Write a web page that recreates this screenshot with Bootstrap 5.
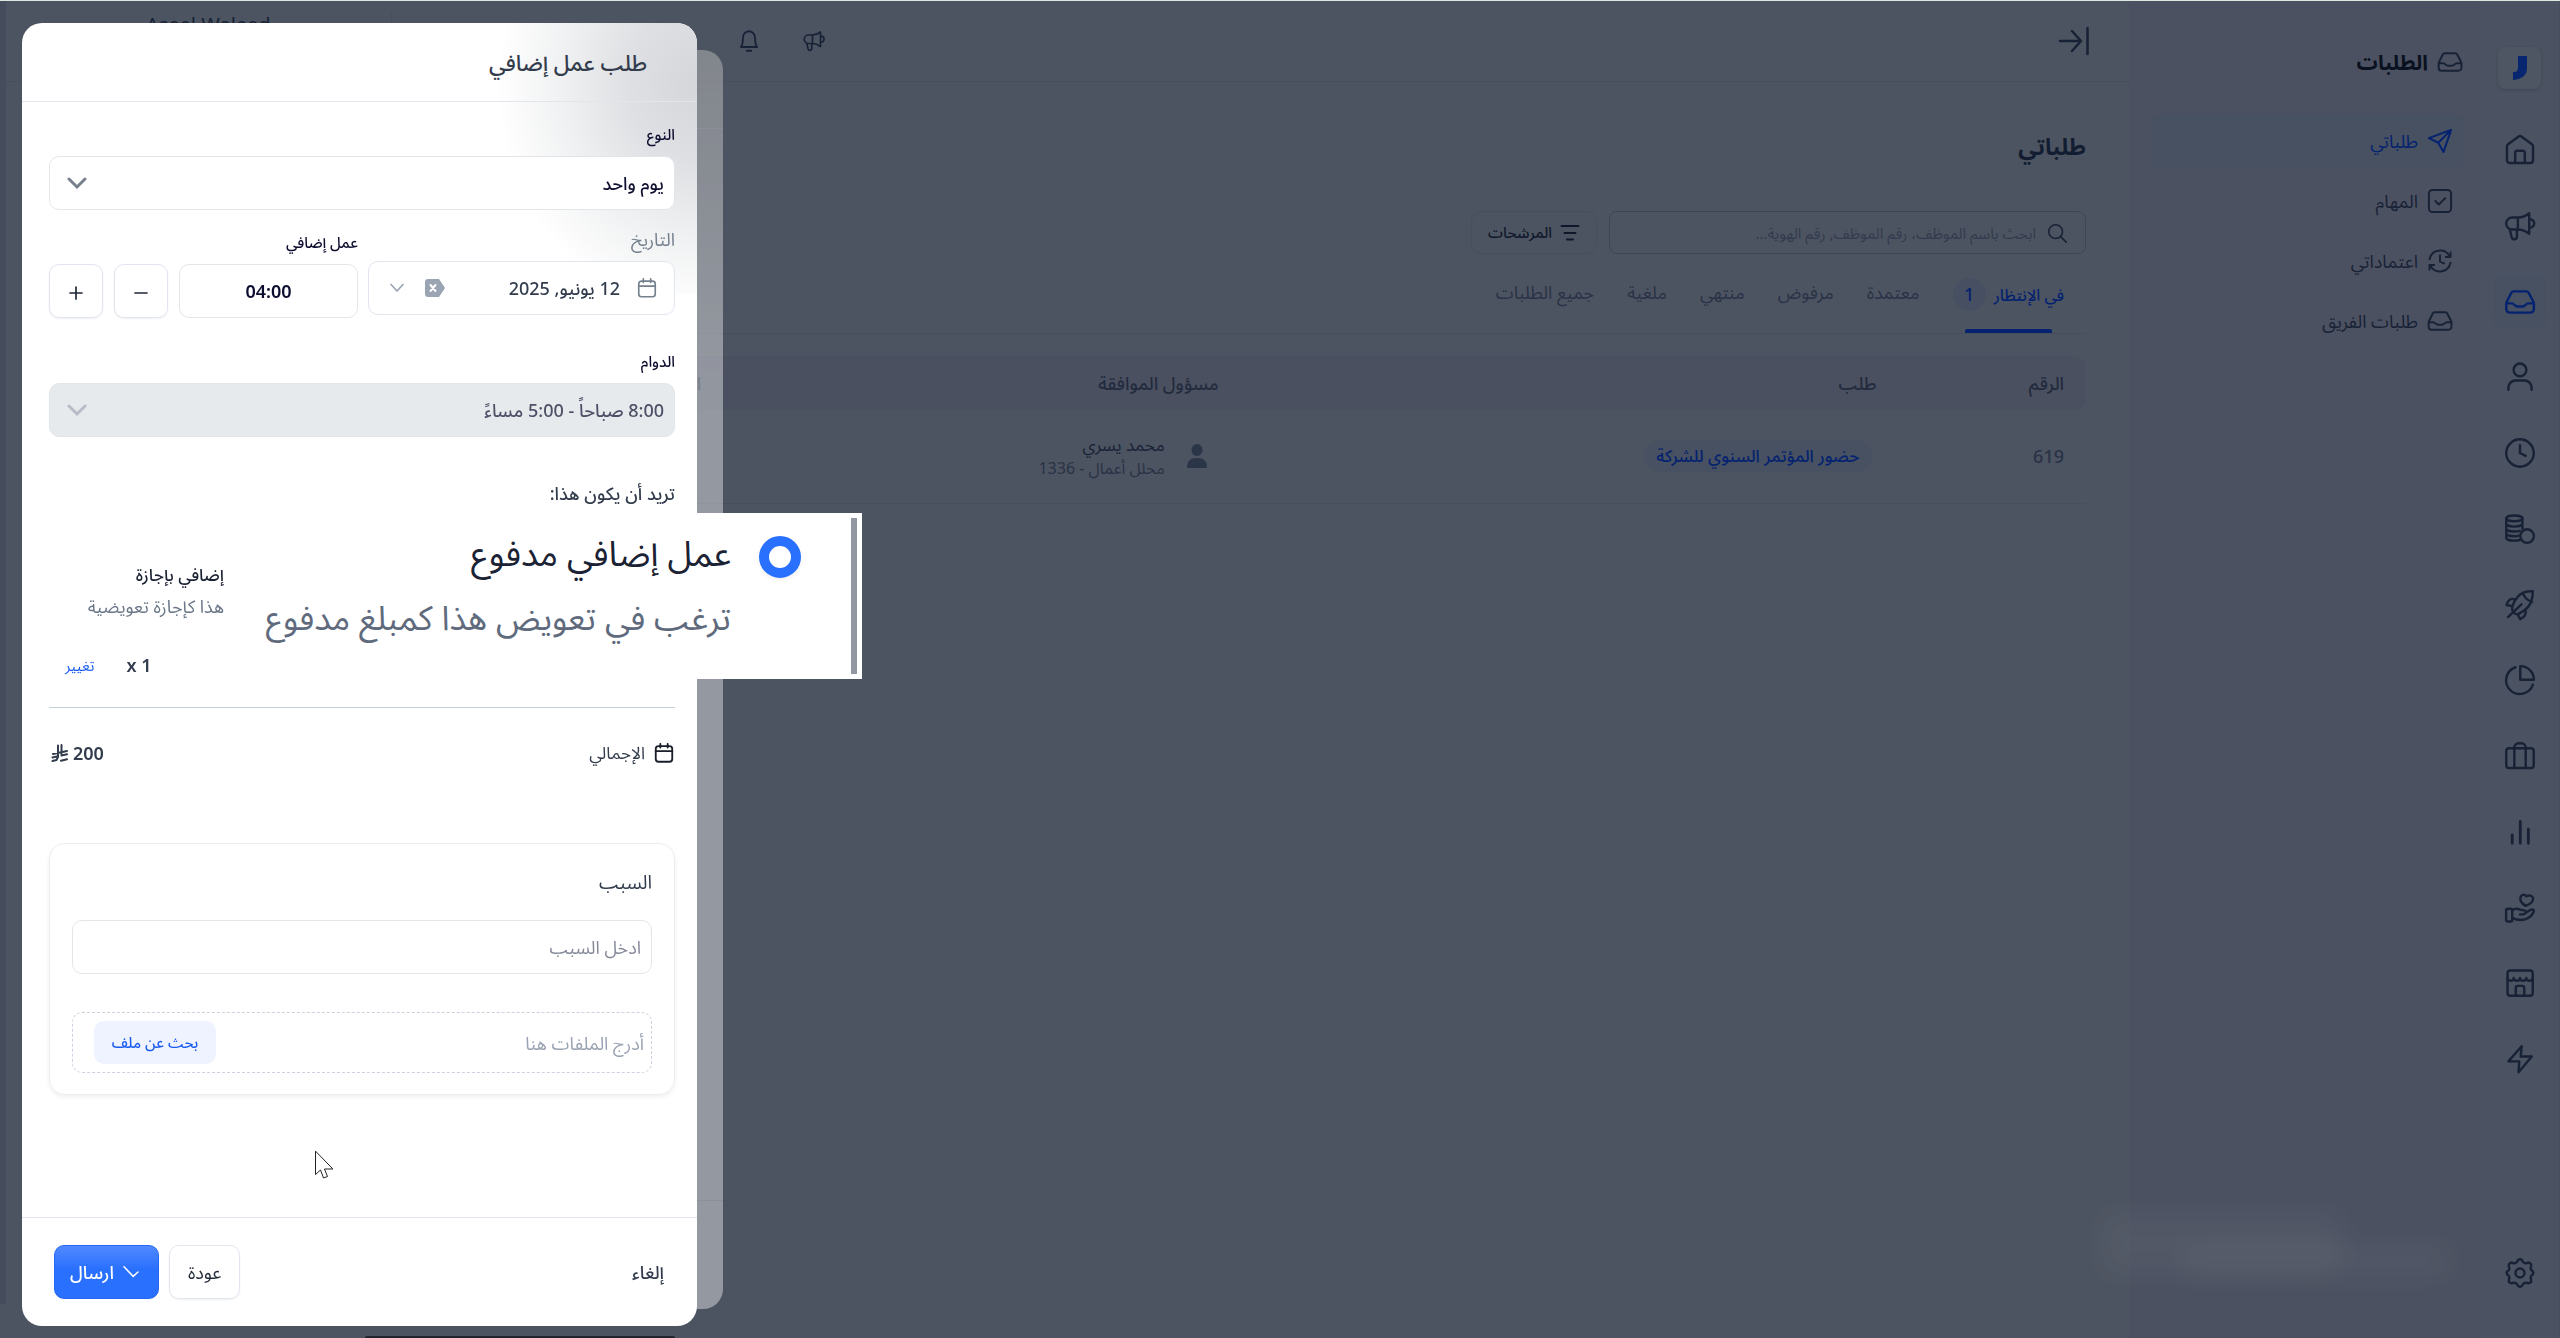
<!DOCTYPE html>
<html lang="ar" dir="rtl">
<head>
<meta charset="utf-8">
<meta name="viewport" content="width=device-width, initial-scale=1">
<title>الطلبات</title>
<link href="https://cdn.jsdelivr.net/npm/bootstrap@5.3.0/dist/css/bootstrap.min.css" rel="stylesheet">
<style>
:root{--ink:#182236;--soft:#293246;--line:#474e5c;--blue:#04226f;--tint:#475162}
body{font-family:"Noto Sans","Noto Sans Arabic","DejaVu Sans",sans-serif;font-size:18px;line-height:28px;color:var(--ink);background:#4d5461;border-top:1px solid #dfe5e0;overflow:hidden}
a{color:inherit;text-decoration:none}
svg{fill:none;stroke:currentColor;stroke-width:1.7;stroke-linecap:round;stroke-linejoin:round;flex:none}
.shell{height:calc(100vh - 1px)}
.rail{width:80px;background:#4b5261;border-right:1px solid var(--line);padding:46px 0 38px}
.rail-logo{width:43px;height:42px;border-radius:8px;background:#4f5663;box-shadow:0 1px 3px #3f4655}
.rail-list{margin:34px 0 160px}
.rail-item{width:54px;height:54px;border-radius:10px}
.rail-item.active{background:var(--tint);color:var(--blue)}
.side{width:351px;background:#4b5160;padding:41px 16px 0 22px}
.side h2{font-size:21px;line-height:40px;font-weight:700;color:#0a1120}
.side-link{height:54px;border-radius:10px;padding:0 10px;margin-bottom:6px}
.side-link.active{background:var(--tint);color:var(--blue)}
.gutter{width:6px;height:1303px;background:#454c5b}
.top-bar{height:81px;border-bottom:1px solid var(--line);padding:0 38px 0 140px}
.top-rule{width:1px;height:58px;background:var(--line)}
.bell{margin-left:344px}
.mega{margin-left:40px}
.user-name{margin-right:120px;padding-bottom:32px;font-size:20px}
.content{padding:41px 43px 0}
.content h1{font-size:23px;line-height:46px;font-weight:700;color:#131d31}
.tools{margin-top:42px}
.search{width:477px;height:43px;border:1px solid #3b4759;border-radius:8px;padding:0 17px 0 0}
.search input{background:none;border:0;outline:0;font-size:15px;color:var(--ink)}
.search input::placeholder{color:#323b4e;opacity:1}
.filter-btn{height:43px;border:1px solid var(--line);border-radius:10px;font-size:15px;font-weight:500;color:#0f172a;padding:0 16px}
.tabs{border-bottom:1px solid var(--line);height:80px;padding:0 22px;gap:33px;color:var(--soft)}
.tabs a{padding:24px 0 0;white-space:nowrap}
.tabs a.active{color:var(--blue);position:relative;font-size:16px;font-weight:500}
.tabs a.active::after{content:"";position:absolute;left:12px;right:12px;bottom:0;height:4px;border-radius:2px 2px 0 0;background:var(--blue)}
.count{display:inline-block;width:33px;height:33px;line-height:33px;border-radius:17px;background:#475063;text-align:center;margin-right:4px;font-size:18px}
.req-table{table-layout:fixed;margin-top:22px}
.req-table th{background:#4a5060;height:54px;padding:0 22px;font-weight:500;color:#222b3e}
.req-table th:first-child{border-radius:0 12px 12px 0}
.req-table td{height:93px;padding:0 22px;border-bottom:1px solid var(--line);color:var(--soft)}
.req-table td:first-child{font-weight:500}
.pill{background:var(--tint);color:var(--blue);border-radius:16px;padding:0 12px;font-size:17px;font-weight:500;display:inline-block;line-height:32px;margin-right:5px}
.approver{gap:22px;padding-right:12px}
.approver small{font-size:16px;line-height:22px}
.approver div div{font-size:17px;line-height:24px;color:var(--ink)}
.smudge{position:fixed;background:rgba(255,255,255,.045);filter:blur(14px);border-radius:12px}
.taskbar{position:fixed;left:365px;bottom:0;width:310px;height:2px;border-radius:10px 10px 0 0;background:#20252e}
.back-drawer{position:fixed;left:22px;top:50px;bottom:29px;width:701px;border-radius:20px;background:linear-gradient(#0000001f,#0000001a 60px,transparent 330px) no-repeat,rgba(255,255,255,.4)}
.back-drawer::before{content:"";position:absolute;left:0;right:0;top:78px;bottom:108px;border:solid #8c909b;border-width:1px 0}
.drawer{position:fixed;left:22px;top:23px;bottom:12px;width:675px;border-radius:20px;background:#fff;color:#323c4d}
.drawer::before{content:"";position:absolute;right:0;top:0;width:210px;height:270px;border-radius:0 20px 0 0;background:radial-gradient(ellipse 200px 230px at 100% 22%,#d4d6da 0,#dfe0e3 35%,#f0f1f2 68%,#fff 100%)}
.drawer>*{position:relative}
.drawer-head{height:79px;border-bottom:1px solid #e2e5ec;padding:0 50px}
.drawer-head h2{font-size:22px;line-height:40px;font-weight:500}
.drawer-main{padding:18px 22px 0 27px}
.lbl{display:block;font-size:15px;font-weight:500;line-height:28px;margin-bottom:8px;color:#0d0d30}
.lbl-soft{font-size:18px;font-weight:400;color:#75808f}
.field{height:54px;border:1px solid #e2e5ea;border-radius:10px;background-color:#fff;color:#0d0d30;font-size:18px;padding:0 10px}
.field::placeholder{color:#85899a}
select.field{padding:0 10px 0 40px;font-weight:500;background-position:left 17px center;background-size:20px;background-image:url("data:image/svg+xml,%3Csvg xmlns='http://www.w3.org/2000/svg' viewBox='0 0 20 20' fill='none' stroke='%2377808c' stroke-width='3' stroke-linecap='round'%3E%3Cpath d='M2 6l8 8 8-8'/%3E%3C/svg%3E")}
select.field:disabled{background-color:#e6eaed;color:#4d5066;opacity:1;background-image:url("data:image/svg+xml,%3Csvg xmlns='http://www.w3.org/2000/svg' viewBox='0 0 20 20' fill='none' stroke='%23b9bbc6' stroke-width='3' stroke-linecap='round'%3E%3Cpath d='M2 6l8 8 8-8'/%3E%3C/svg%3E")}
.form-line{margin-top:15px;gap:10px}
.date-col{width:307px}
.date-box{padding:0 16px 0 20px;border-color:#e0e5ee}
.date-box input{border:0;outline:0;background:none;width:0;color:#323c4d;font-size:18px;font-weight:500}
.clear-btn{background:none;border:0;padding:0;line-height:0;color:#9ba4b2;margin-left:20px}
.hours-col{min-width:0;padding-top:3px}
.hours-col input{width:0;font-weight:600}
.step-btn{width:54px;flex:none;padding:0;box-shadow:0 1px 2px #0f172a12;color:#1f2937;border-color:#e0e5ee}
.shift-lbl{margin-top:29px}
.opt{height:144px;padding-top:54px;width:175px;margin-right:auto;white-space:nowrap}
.opt span{display:block;line-height:28px}
.opt-name{color:#1b2233;font-weight:500;font-size:17px}
.opt-note{color:#6b7788;font-size:18px;margin-top:3px}
.factor{padding:0 0 28px 16px;gap:32px}
.total{padding:31px 0 0 2px}
.drawer hr{margin:0;border-color:#c5cfd6;opacity:1}
.reason{border:1px solid #ebedf0;border-radius:16px;box-shadow:0 2px 4px #0f172a12;padding:24px 22px 21px;margin-top:76px}
.reason .field{margin:24px 0 38px}
.drop{height:61px;border:1px dashed #ccd3de;border-radius:10px;padding:0 7px 0 21px;color:#9aa3b3;font-size:18px}
.browse-btn{height:43px;width:122px;border-radius:10px;background:#eef3ff;color:#1c5df0;font-size:15px;font-weight:500;padding:0;border:0}
.drawer-foot{border-top:1px solid #e2e5ec;height:109px;padding:0 33px 0 32px;gap:10px}
.drawer-foot .btn{height:54px;border-radius:10px;padding:0 18px;font-size:18px;color:#1f2937}
.drawer-foot .send-btn{background:linear-gradient(#5189ff,#2970ff 45%);border:1px solid #2468f5;color:#fff;padding:0 18px 0 15px;font-weight:500}
.drawer-foot .back-btn{border:1px solid #e2e6ee;box-shadow:0 1px 2px #0f172a12}
.spot{position:absolute!important;left:202px;top:490px;width:638px;height:166px;background:#fff;padding:5px}
.spot-inner{height:156px;border-right:6px solid #9397a1;padding:3px 50px 0 0;gap:28px}
.spot input{width:42px;height:42px;margin:15px 0 0;appearance:none;border:10px solid #2970ff;border-radius:50%;box-shadow:0 2px 4px #0001}
.spot span{display:block;font-size:35px;line-height:64px;color:#1b2233;white-space:nowrap}
.spot .spot-note{color:#5f6b7d;font-size:34px}
.pointer{position:fixed;left:314px;top:1150px}
</style>
<script src="https://cdn.jsdelivr.net/npm/bootstrap@5.3.0/dist/js/bootstrap.bundle.min.js"></script>
</head>
<body>
<svg width="0" height="0" class="position-absolute">
<symbol id="i-inbox" viewBox="0 0 24 24"><path d="M7.6 4.5h8.8a2 2 0 0 1 1.8 1.1l3.4 6.6c.2.3.2.7.2 1V17a2.5 2.5 0 0 1-2.5 2.5H4.800A2.500 2.500 0 0 1 2.300 17v-3.800c0-.3.1-.7.2-1l3.300-6.600a2 2 0 0 1 1.800-1.100zM2.400 13h3.800c1.800 0 2 2.200 4 2.200h3.600c2 0 2.200-2.200 4-2.200h3.900"/></symbol>
<symbol id="i-mega" viewBox="0 0 24 24"><path d="M6.500 6H10.500v8.500H6.500a4.250 4.250 0 0 1 0-8.500zM10.500 6c3 0 5.500-1 8-3v14.500c-2.500-2-5-3-8-3M19 7.200a3 3 0 0 1 0 6M4.800 14.500l1.300 5.500a1.900 1.900 0 0 0 3.700-.4v-5"/></symbol>
<symbol id="i-cal" viewBox="0 0 24 24"><rect x="3" y="4.500" width="18" height="17" rx="3"/><path d="M3 10h18M8 2v4M16 2v4"/></symbol>
</svg>

<div class="shell d-flex">
  <nav class="rail d-flex flex-column align-items-center flex-shrink-0" aria-label="رئيسي">
    <a href="#" class="rail-logo d-flex align-items-center justify-content-center"><svg width="16" height="26" viewBox="0 0 16 26" style="fill:#082670;stroke:none"><path d="M6 1h9v12c0 7-4 11-14 12v-8c4 0 5-1 5-5z"/></svg></a>
    <div class="rail-list d-flex flex-column justify-content-between flex-grow-1">
      <a href="#" class="rail-item d-flex align-items-center justify-content-center"><svg width="34" height="34" viewBox="0 0 24 24"><path d="M2.800 9.500a2 2 0 0 1 .8-1.500l7.200-5.400a2 2 0 0 1 2.400 0L20.400 8a2 2 0 0 1 .8 1.500v9.700a2 2 0 0 1-2 2H4.800a2 2 0 0 1-2-2zM8.600 21v-7a1.500 1.500 0 0 1 1.500-1.500h3.800a1.500 1.500 0 0 1 1.500 1.500v7"/></svg></a>
      <a href="#" class="rail-item d-flex align-items-center justify-content-center"><svg width="34" height="34"><use href="#i-mega"/></svg></a>
      <a href="#" class="rail-item active d-flex align-items-center justify-content-center"><svg width="34" height="34"><use href="#i-inbox"/></svg></a>
      <a href="#" class="rail-item d-flex align-items-center justify-content-center"><svg width="34" height="34" viewBox="0 0 24 24"><circle cx="12" cy="7" r="4.500"/><path d="M3.800 21v-1.500a5 5 0 0 1 5-5h6.400a5 5 0 0 1 5 5V21"/></svg></a>
      <a href="#" class="rail-item d-flex align-items-center justify-content-center"><svg width="34" height="34" viewBox="0 0 24 24"><circle cx="12" cy="12" r="9.700"/><path d="M12 6.500V12l4 2"/></svg></a>
      <a href="#" class="rail-item d-flex align-items-center justify-content-center"><svg width="34" height="34" viewBox="0 0 24 24"><ellipse cx="8" cy="4.500" rx="5.700" ry="2"/><path d="M2.300 4.500v13.600c0 1.200 2.500 2.100 5.700 2.100 1.600 0 3-.2 4-.6M13.700 4.500v7.200M2.300 8.200c0 1.200 2.500 2.100 5.700 2.100s5.700-.9 5.700-2.100M2.300 11.700c0 1.200 2.500 2.100 5.700 2.100 1.400 0 2.800-.2 3.800-.5M2.300 15c0 1.200 2.500 2.100 5.700 2.100 1.200 0 2.300-.1 3.200-.4"/><circle cx="17" cy="17" r="4.800"/></svg></a>
      <a href="#" class="rail-item d-flex align-items-center justify-content-center"><svg width="34" height="34" viewBox="0 0 24 24"><path d="M6.500 13.500C8 8 12 3 17.500 2.500l3.500-.3-.2 4C20 12 16.500 16 10.500 18.500c-2 .6-4.800-2.500-4-5zM14 3.800c1.500 3.500 3 5 6.500 6M3.500 20.500l9.500-9M8.500 8.500C6 6.500 3.500 8.500 2.500 12l4 .8M16 15.800c.5 3-1.200 5-3.800 6.200l-1.900-3.500"/></svg></a>
      <a href="#" class="rail-item d-flex align-items-center justify-content-center"><svg width="34" height="34" viewBox="0 0 24 24"><path d="M8.800 3A9.700 9.700 0 1 0 21.100 15.300M12.200 2.200a9.500 9.500 0 0 1 9.600 9.600h-9.600z"/></svg></a>
      <a href="#" class="rail-item d-flex align-items-center justify-content-center"><svg width="34" height="34" viewBox="0 0 24 24"><rect x="2.300" y="6.500" width="19.400" height="14" rx="2"/><path d="M8 20.500V6a3 3 0 0 1 3-3h2a3 3 0 0 1 3 3v14.500"/></svg></a>
      <a href="#" class="rail-item d-flex align-items-center justify-content-center"><svg width="34" height="34" viewBox="0 0 24 24" style="stroke-width:2"><path d="M6.500 14v6M12.200 4.500V20M17.900 10v10"/></svg></a>
      <a href="#" class="rail-item d-flex align-items-center justify-content-center"><svg width="34" height="34" viewBox="0 0 24 24"><rect x="2.200" y="12.500" width="4.300" height="9" rx="1"/><path d="M6.500 13.500c2-1.500 3.500-1.300 5.500-.3 1.200.5 3.300 0 4 1 .5 1.300-.5 2.300-2.500 2.300H12M16 15.300l3.500-2c1.500-.7 2.500 0 2.300 1-1.300 3.700-5 6.200-9 6.200-2.500 0-4.500-.5-6.300-1.500M16 10.500c-2.500-1.500-4.500-4-3.500-6.500 1-1.800 3-1.800 4-.3 1.800-1 4.300-.7 4.700 1.300.2 2.500-2.500 4.500-5.200 5.500z"/></svg></a>
      <a href="#" class="rail-item d-flex align-items-center justify-content-center"><svg width="34" height="34" viewBox="0 0 24 24"><rect x="3.200" y="3.200" width="17.800" height="17.800" rx="2"/><path d="M3.200 8.500c0 2.500 4.200 2.500 4.400 0 .2 2.500 4.200 2.500 4.400 0 .2 2.500 4.200 2.500 4.400 0 .2 2.500 4.600 2.500 4.600 0M9 21v-5.500a1.500 1.500 0 0 1 1.500-1.500h3a1.500 1.500 0 0 1 1.500 1.500V21"/></svg></a>
      <a href="#" class="rail-item d-flex align-items-center justify-content-center"><svg width="34" height="34" viewBox="0 0 24 24"><path d="M13.200 3 3.800 13.700h7.700L11 21.300l9.300-11.100h-7.800z"/></svg></a>
    </div>
    <a href="#" class="rail-item d-flex align-items-center justify-content-center"><svg width="34" height="34" viewBox="0 0 24 24"><path d="M9.700 4.300 10.600 3a1.800 1.800 0 0 1 2.800 0l.9 1.300a2 2 0 0 0 2.100.8l1.500-.3a1.800 1.800 0 0 1 2 2l-.3 1.500a2 2 0 0 0 .8 2l.3.300a1.800 1.800 0 0 1 0 2.800l-.4.300a2 2 0 0 0-.7 2l.3 1.500a1.800 1.800 0 0 1-2 2l-1.500-.3a2 2 0 0 0-2.100.8L13.400 21a1.800 1.800 0 0 1-2.800 0l-.9-1.300a2 2 0 0 0-2.100-.8l-1.500.3a1.800 1.800 0 0 1-2-2l.3-1.500a2 2 0 0 0-.7-2l-.4-.300a1.800 1.800 0 0 1 0-2.800l.4-.300a2 2 0 0 0 .7-2l-.3-1.500a1.800 1.800 0 0 1 2-2l1.500.3a2 2 0 0 0 2.100-.8z"/><circle cx="12" cy="12" r="3.200"/></svg></a>
  </nav>

  <aside class="side flex-shrink-0">
    <div class="d-flex align-items-center gap-2 mb-4 pb-2"><svg width="28" height="28"><use href="#i-inbox"/></svg><h2 class="m-0">الطلبات</h2></div>
    <a href="#" class="side-link active d-flex align-items-center gap-2"><svg width="28" height="28" viewBox="0 0 24 24"><path d="M21.500 2.500 2.500 9.500l8 4 4.500 8zM21.500 2.500l-11 11"/></svg><span>طلباتي</span></a>
    <a href="#" class="side-link d-flex align-items-center gap-2"><svg width="28" height="28" viewBox="0 0 24 24"><rect x="2.500" y="2.500" width="19" height="19" rx="3"/><path d="m8 12 3 3 5.500-5.500"/></svg><span>المهام</span></a>
    <a href="#" class="side-link d-flex align-items-center gap-2"><svg width="28" height="28" viewBox="0 0 24 24"><path d="M3 10.500a9.300 9.300 0 0 1 17-3M21 13.500a9.300 9.300 0 0 1-17 3M21 4.500v4h-4M3 19.500v-4h4M12 7v5.500l3.500 1.500"/></svg><span>اعتماداتي</span></a>
    <a href="#" class="side-link d-flex align-items-center gap-2"><svg width="28" height="28"><use href="#i-inbox"/></svg><span>طلبات الفريق</span></a>
  </aside>

  <main class="flex-grow-1">
    <header class="top-bar d-flex align-items-center">
      <svg width="34" height="34" viewBox="0 0 34 34" style="stroke-width:2.500"><path d="M3 17h20M15 7l9 10-9 10M30.500 4v26"/></svg>
      <span class="flex-grow-1"></span>
      <svg width="24" height="24" class="mega"><use href="#i-mega"/></svg>
      <svg width="26" height="26" viewBox="0 0 24 24" class="bell"><path d="M4.500 17.500h15c-1.500-1.500-1.800-3-1.800-7.500 0-4-2.200-7-5.700-7s-5.700 3-5.700 7c0 4.500-.3 6-1.800 7.500zM10 21h4"/></svg>
      <span class="top-rule"></span>
      <span dir="ltr" class="user-name">Aseel Waleed</span>
    </header>
    <div class="content">
      <h1 class="mb-0">طلباتي</h1>
      <div class="tools d-flex gap-2">
        <label class="search d-flex align-items-center"><svg width="22" height="22" viewBox="0 0 24 24" class="ms-2"><circle cx="10.500" cy="10.500" r="7.500"/><path d="m16 16 6 6"/></svg><input class="flex-grow-1" type="search" aria-label="بحث" placeholder="ابحث باسم الموظف، رقم الموظف, رقم الهوية..."></label>
        <button class="btn filter-btn d-flex align-items-center gap-2 me-1"><svg width="20" height="20" viewBox="0 0 20 20" style="stroke-width:2"><path d="M1.500 3h17M4.500 10h11M7 16.500h6"/></svg>المرشحات</button>
      </div>
      <nav class="tabs d-flex">
        <a href="#" class="active">في الإنتظار <span class="count">1</span></a><a href="#">معتمدة</a><a href="#">مرفوض</a><a href="#">منتهي</a><a href="#">ملغية</a><a href="#">جميع الطلبات</a>
      </nav>
      <table class="req-table w-100">
        <colgroup><col style="width:9.200%"><col style="width:32.300%"><col style="width:25.400%"><col></colgroup>
        <thead><tr><th>الرقم</th><th>طلب</th><th>مسؤول الموافقة</th><th>الحالة</th></tr></thead>
        <tbody><tr><td>619</td><td><a href="#" class="pill">حضور المؤتمر السنوي للشركة</a></td><td><div class="approver d-flex align-items-center"><svg width="20" height="24" viewBox="0 0 20 24" style="fill:#2b3548;stroke:none"><ellipse cx="10" cy="6" rx="5.500" ry="6"/><path d="M0 24c0-7 3-10 10-10s10 3 10 10z"/></svg><div><div>محمد يسري</div><small class="d-block">محلل أعمال - 1336</small></div></div></td><td></td></tr></tbody>
      </table>
    </div>
  </main>
  <div class="gutter flex-shrink-0"></div>
</div>

<div class="smudge" style="left:2102px;top:1214px;width:240px;height:60px"></div>
<div class="smudge" style="left:2180px;top:1246px;width:270px;height:30px"></div>
<div class="taskbar"></div>
<div class="back-drawer"></div>

<section class="drawer d-flex flex-column" role="dialog" aria-label="طلب عمل إضافي">
  <div class="drawer-head d-flex align-items-center flex-shrink-0"><h2 class="m-0">طلب عمل إضافي</h2></div>
  <div class="drawer-main flex-grow-1">
    <label class="lbl" for="kind">النوع</label>
    <select id="kind" class="form-select field"><option>يوم واحد</option></select>
    <div class="form-line d-flex">
      <div class="date-col flex-shrink-0">
        <label class="lbl lbl-soft" for="day">التاريخ</label>
        <div class="field date-box d-flex align-items-center">
          <svg width="22" height="22" class="ms-3" style="color:#75808f;stroke-width:1.800"><use href="#i-cal"/></svg>
          <input id="day" class="flex-grow-1 p-0" value="12 يونيو, 2025">
          <button class="clear-btn" aria-label="مسح"><svg width="20" height="18" viewBox="0 0 20 18" style="fill:#9ba4b2;stroke:none"><path d="M3 0h11l6 9-6 9H3a3 3 0 0 1-3-3V3a3 3 0 0 1 3-3z"/><path d="m5.500 6 5 6m0-6-5 6" style="stroke:#fff;stroke-width:2"/></svg></button>
          <svg width="16" height="10" viewBox="0 0 16 10" style="color:#9ba4b2"><path d="m2 1.500 6 6.500 6-6.500"/></svg>
        </div>
      </div>
      <div class="hours-col flex-grow-1">
        <label class="lbl" for="hrs">عمل إضافي</label>
        <div class="d-flex" style="gap:11px">
          <input id="hrs" class="field flex-grow-1 text-center" value="04:00">
          <button class="btn field step-btn" aria-label="إنقاص"><svg width="18" height="18" viewBox="0 0 18 18"><path d="M3 9h12"/></svg></button>
          <button class="btn field step-btn" aria-label="زيادة"><svg width="18" height="18" viewBox="0 0 18 18"><path d="M3 9h12M9 3v12"/></svg></button>
        </div>
      </div>
    </div>
    <label class="lbl shift-lbl" for="shift">الدوام</label>
    <select id="shift" class="form-select field" disabled><option>8:00 صباحاً - 5:00 مساءً</option></select>
    <div class="fw-medium" style="margin-top:42px">تريد أن يكون هذا:</div>
    <div class="opt"><span class="opt-name">إضافي بإجازة</span><span class="opt-note">هذا كإجازة تعويضية</span></div>
    <div dir="ltr" class="factor d-flex align-items-center"><a href="#" style="color:#1c5df0;font-size:15px">تغيير</a><span class="fw-semibold">x 1</span></div>
    <hr>
    <div class="total d-flex align-items-center"><svg width="22" height="22" class="ms-2" style="color:#1b1f2a;stroke-width:2"><use href="#i-cal"/></svg><span style="font-size:17px">الإجمالي</span>
      <span class="me-auto d-flex align-items-center gap-1 fw-semibold">200 <svg width="18" height="18" viewBox="0 0 18 18" style="stroke-width:2"><path d="M7 1.500v11.500M10.500 1v10.500M2 10l14-3M1.500 13.500 7 12.300M10.500 11.500l5.500-1.200M10 16.800l6-1.500M1.500 17l4-1 1.500-3"/></svg></span></div>
    <div class="reason">
      <label for="why" class="d-block" style="font-size:19px">السبب</label>
      <input id="why" class="field w-100" placeholder="ادخل السبب">
      <div class="drop d-flex align-items-center justify-content-between"><span>أدرج الملفات هنا</span><button class="btn browse-btn">بحث عن ملف</button></div>
    </div>
  </div>
  <div class="drawer-foot d-flex align-items-center flex-shrink-0">
    <a href="#" class="ms-auto fw-medium">إلغاء</a>
    <button class="btn back-btn">عودة</button>
    <button class="btn send-btn d-flex align-items-center gap-2"><svg width="18" height="14" viewBox="0 0 20 16"><path d="m2 2 10.500 11L18 8"/></svg>ارسال</button>
  </div>

  <div class="spot"><div class="spot-inner d-flex"><input type="radio" id="paid" name="comp" checked><label for="paid"><span>عمل إضافي مدفوع</span><span class="spot-note">ترغب في تعويض هذا كمبلغ مدفوع</span></label></div></div>
</section>
<svg class="pointer" width="20" height="30" viewBox="0 0 20 30" style="fill:#fff;stroke:#222;stroke-width:1"><path d="M1.500 1.500v23l5-4.500 3 8 4-1.500-3-7.500h8z"/></svg>
</body>
</html>
